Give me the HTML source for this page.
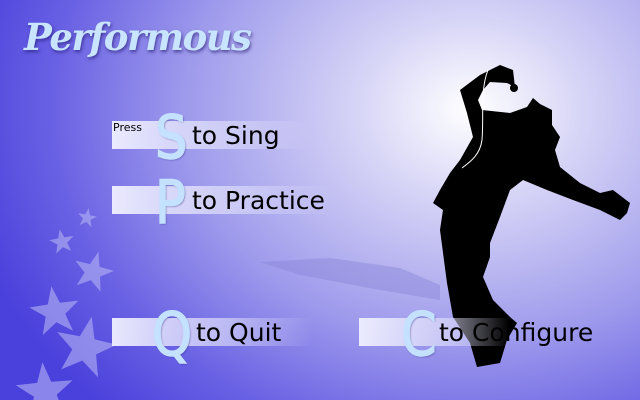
<!DOCTYPE html>
<html><head><meta charset="utf-8"><style>
html,body{margin:0;padding:0}
body{width:640px;height:400px;overflow:hidden;position:relative;
background:radial-gradient(ellipse 520px 420px at 470px 110px,#ffffff 0%,#d6d4f6 22%,#9e9aec 55%,#6a62e4 80%,#4a40dc 100%);
font-family:"DejaVu Sans","Liberation Sans",sans-serif}
.t{position:absolute;left:24px;top:15px;font-family:"DejaVu Serif","Liberation Serif",serif;font-style:italic;font-weight:bold;font-size:37px;color:#c8e4ff;text-shadow:1px 2px 3px rgba(40,30,120,.7);letter-spacing:-1.5px}
.bar{position:absolute;height:28px;background:linear-gradient(90deg,rgba(240,240,255,.95),rgba(225,225,250,.6) 60%,rgba(225,225,250,0))}
.L{position:absolute;font-size:60px;color:#c4e2ff;text-shadow:1px 1px 2px rgba(40,30,120,.6);line-height:1;transform:scaleX(.85);transform-origin:left top;-webkit-text-stroke:1.5px #c4e2ff}
.x{position:absolute;font-size:25px;color:#000;line-height:1}
.p{position:absolute;left:113px;top:121px;font-size:11px}
</style></head><body>
<svg width="640" height="400" style="position:absolute;left:0;top:0">
<defs><polygon id="st" points="0,-1 0.235,-0.324 0.951,-0.309 0.38,0.124 0.588,0.809 0,0.4 -0.588,0.809 -0.38,0.124 -0.951,-0.309 -0.235,-0.324"/></defs>
<g fill="#b4b4f4" opacity=".6">
<use href="#st" transform="translate(87,218) scale(10) rotate(10)"/>
<use href="#st" transform="translate(62,242) scale(13) rotate(-10)"/>
<use href="#st" transform="translate(93,272) scale(21) rotate(15)"/>
<use href="#st" transform="translate(55,312) scale(26) rotate(-8)"/>
<use href="#st" transform="translate(85,348) scale(32) rotate(12)"/>
<use href="#st" transform="translate(45,392) scale(30) rotate(-5)"/>
</g>
<polygon fill="#8a86d8" opacity=".45" points="260,262 330,258 400,268 440,285 440,300 380,290 300,275"/>
<polygon fill="#000" points="460,90 480,75 500,65 513,70 515,87 507,83 490,82 483,90 478,100 482,110 510,113 527,107 533,98 540,104 552,110 552,125 560,137 555,150 560,167 580,183 600,193 613,190 630,203 627,213 620,220 600,210 573,200 547,190 523,180 510,190 500,217 490,243 490,257 483,277 493,300 510,317 517,323 507,340 500,363 477,367 470,343 453,317 447,283 440,230 443,210 433,203 440,190 450,173 460,160 473,137 467,113"/>
<circle cx="514" cy="88" r="4" fill="#000"/>
<path d="M488,70 C480,90 484,115 482,140 C480,155 470,162 462,168" stroke="#fff" stroke-width="1" fill="none"/>
</svg>
<div class="t">Performous</div>
<div class="bar" style="left:112px;top:121px;width:200px"></div>
<div class="bar" style="left:112px;top:186px;width:220px"></div>
<div class="bar" style="left:112px;top:318px;width:200px"></div>
<div class="bar" style="left:359px;top:318px;width:150px"></div>
<div class="p">Press</div>
<div class="L" style="left:155px;top:108px">S</div><div class="x" style="left:192px;top:123px">to Sing</div>
<div class="L" style="left:155px;top:173px">P</div><div class="x" style="left:192px;top:188px">to Practice</div>
<div class="L" style="left:152px;top:305px">Q</div><div class="x" style="left:196px;top:320px">to Quit</div>
<div class="L" style="left:401px;top:305px">C</div><div class="x" style="left:439px;top:320px">to Configure</div>
</body></html>
